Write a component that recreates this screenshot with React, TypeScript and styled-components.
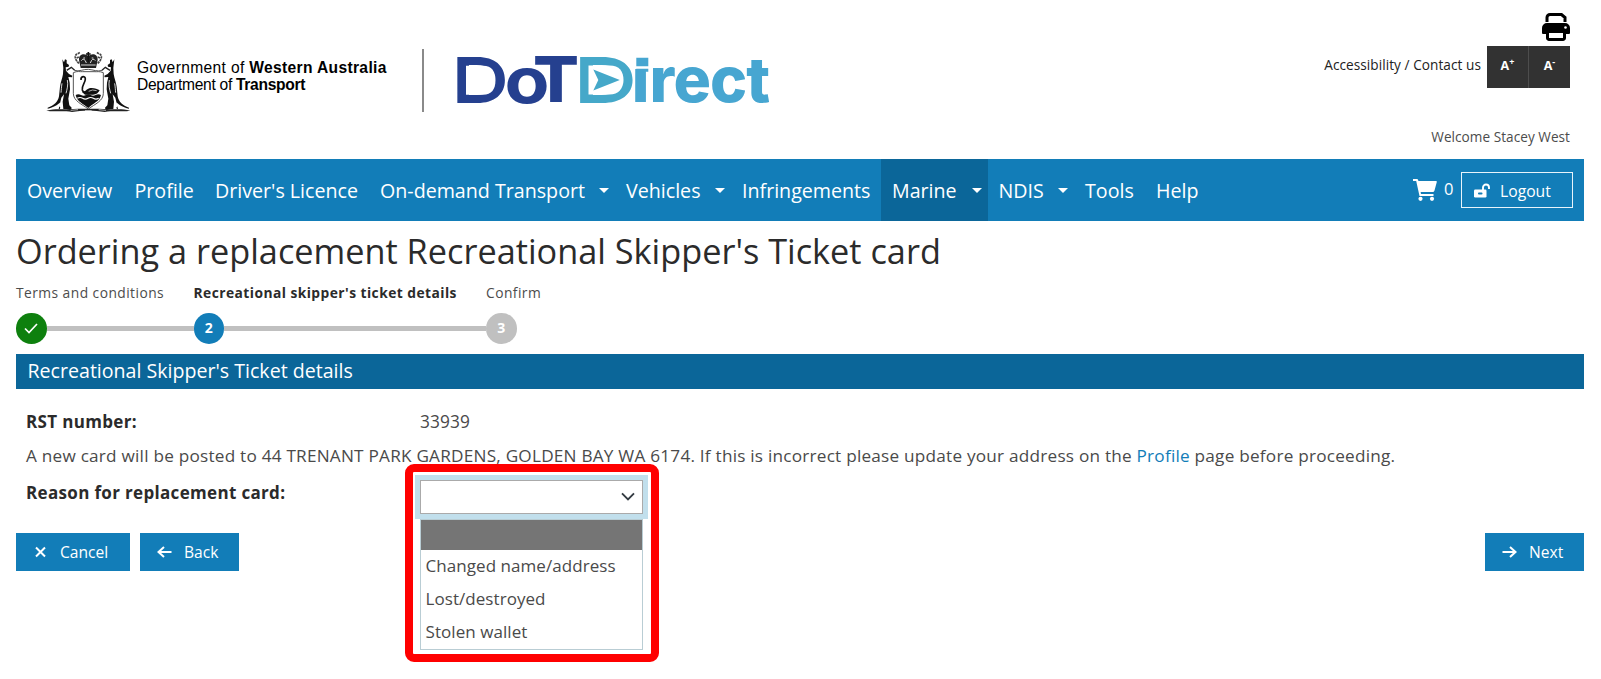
import React from "react";
import styled, { createGlobalStyle } from "styled-components";

const GlobalStyle = createGlobalStyle`
  *, *::before, *::after { box-sizing: border-box; }
  body {
    margin: 0;
    background: #fff;
    color: #4a4a4a;
    font-family: "Open Sans", "Noto Sans", sans-serif;
    font-size: 17px;
  }
  h1, h2, p { margin: 0; padding: 0; }
`;

const blue = "#127db8";
const darkBlue = "#0b6699";

const Page = styled.div`
  width: 1601px;
  height: 679px;
  padding: 0 17px 0 16px;
  display: flex;
  flex-direction: column;
  overflow: hidden;
`;

const Header = styled.header`
  height: 159px;
  display: flex;
  justify-content: space-between;
`;

const Brand = styled.div`
  display: flex;
  align-items: flex-start;
  padding: 49px 0 0 30px;
`;

const AgencyName = styled.div`
  width: 293px;
  height: 63px;
  padding: 10px 0 0 6px;
  border-right: 2px solid #8a8a8a;
  color: #000;
  font-family: "Liberation Sans", Arial, sans-serif;
  font-size: 15.6px;
  line-height: 17px;
  white-space: nowrap;
`;

const AgencyLine = styled.div<{ $track: number }>`
  letter-spacing: ${(p) => p.$track}px;
`;

const Logo = styled.svg`
  margin-left: 29px;
  overflow: visible;
`;

const Utilities = styled.div`
  display: flex;
  flex-direction: column;
  align-items: flex-end;
  padding: 13px 14px 0 0;
`;

const UtilityRow = styled.div`
  display: flex;
  align-items: flex-start;
  margin-top: 5px;
`;

const UtilityLinks = styled.span`
  color: #222;
  font-size: 13.6px;
  line-height: 37px;
  margin-right: 6px;
  letter-spacing: 0.06px;
`;

const SizeButton = styled.button`
  width: 42px;
  height: 42px;
  padding: 0 0 3px;
  border: 0;
  border-right: 1px solid #4d4d4d;
  background: #323232;
  color: #fff;
  font: 700 12.5px "Open Sans", sans-serif;
  sup { font-size: 9px; line-height: 0; vertical-align: 5px; }
  &:last-child { border-right: 0; width: 41px; }
`;

const Welcome = styled.div`
  margin-top: 39px;
  font-size: 13.6px;
  line-height: 20px;
  letter-spacing: 0.04px;
  color: #4c4c4c;
`;

const Nav = styled.nav`
  height: 62px;
  flex: none;
  display: flex;
  align-items: center;
  background: ${blue};
  color: #fff;
`;

const NavItem = styled.a<{ $width: number; $active?: boolean }>`
  width: ${(p) => p.$width}px;
  height: 62px;
  padding: 1px 6px 0 11px;
  display: flex;
  align-items: center;
  justify-content: space-between;
  background: ${(p) => (p.$active ? darkBlue : "transparent")};
  font-size: 19.65px;
  white-space: nowrap;
`;

const Caret = styled.span`
  border: 5px solid transparent;
  border-top-color: #fff;
  border-bottom: 0;
`;

const Account = styled.div`
  margin-left: auto;
  padding-right: 11px;
  display: flex;
  align-items: center;
`;

const CartCount = styled.span`
  width: 24px;
  padding: 0 0 2px 7px;
  font-size: 16.5px;
  line-height: 22px;
`;

const LogoutButton = styled.button`
  width: 112px;
  height: 36px;
  padding: 1px 0 0 12px;
  display: flex;
  align-items: center;
  gap: 10px;
  border: 1.5px solid #e8f4fb;
  background: transparent;
  color: #fff;
  font: 15.7px "Open Sans", sans-serif;
`;

const Title = styled.h1`
  height: 60px;
  flex: none;
  color: #2b2b2b;
  font-size: 34.28px;
  font-weight: 400;
  line-height: 59px;
  white-space: nowrap;
`;

const Steps = styled.div`
  height: 72.5px;
  flex: none;
  display: flex;
`;

const Step = styled.div<{ $width: number; $current?: boolean }>`
  width: ${(p) => p.$width}px;
  font-size: 13.8px;
  line-height: 24px;
  letter-spacing: 0.45px;
  white-space: nowrap;
  font-weight: ${(p) => (p.$current ? 700 : 400)};
  color: ${(p) => (p.$current ? "#2b2b2b" : "#4c4c4c")};
`;

const StepTrack = styled.div`
  display: flex;
  align-items: center;
  margin-top: 8px;
`;

const StepDot = styled.span<{ $color: string }>`
  width: 30.5px;
  height: 30.5px;
  flex: none;
  border-radius: 50%;
  display: flex;
  align-items: center;
  justify-content: center;
  background: ${(p) => p.$color};
  color: #fff;
  font-size: 14px;
  font-weight: 700;
  letter-spacing: 0;
`;

const StepLine = styled.span`
  flex: 1;
  height: 5px;
  background: #c0c0c0;
`;

const SectionTitle = styled.h2`
  height: 35.5px;
  flex: none;
  padding-left: 11.5px;
  background: ${darkBlue};
  color: #fff;
  font-size: 19.6px;
  font-weight: 400;
  line-height: 34px;
`;

const Form = styled.section`
  height: 144px;
  flex: none;
  padding: 16px 10px 0;
`;

const FieldRow = styled.div`
  display: flex;
  height: 34px;
  line-height: 34px;
`;

const FieldLabel = styled.div<{ $drop?: number }>`
  width: 394px;
  padding-top: ${(p) => p.$drop ?? 0}px;
  color: #2b2b2b;
  font-size: 17px;
  font-weight: 700;
  letter-spacing: 0.33px;
`;

const FieldValue = styled.span`
  font-size: 17.3px;
  letter-spacing: 0.15px;
`;

const Notice = styled.p`
  height: 36px;
  line-height: 34px;
  font-size: 17.2px;
  letter-spacing: 0.22px;
  white-space: nowrap;
  a { color: ${blue}; }
`;

const SelectWrap = styled.div`
  position: relative;
  width: 223px;
  height: 34px;
  margin-top: 4.5px;
`;

const SelectBox = styled.div`
  width: 223px;
  height: 34px;
  padding: 0 7px 1px 0;
  display: flex;
  align-items: center;
  justify-content: flex-end;
  border: 1px solid #aaa;
  background: #fff;
  box-shadow: 0 0 0 5px #c1dfec;
`;

const OptionList = styled.div`
  position: absolute;
  z-index: 1;
  top: 39px;
  left: 0;
  width: 223px;
  height: 131px;
  border: 1px solid #b9cdd4;
  background: #fff;
`;

const Option = styled.div<{ $selected?: boolean }>`
  height: ${(p) => (p.$selected ? 30 : 33)}px;
  padding-left: 4.5px;
  background: ${(p) => (p.$selected ? "#757575" : "transparent")};
  font-size: 17px;
  line-height: 31px;
  letter-spacing: 0.06px;
`;

const Highlight = styled.div`
  position: absolute;
  z-index: 2;
  top: -15.5px;
  left: -15px;
  width: 254px;
  height: 197.5px;
  border: 8px solid #f00;
  border-radius: 9px;
  pointer-events: none;
`;

const Actions = styled.div`
  display: flex;
  gap: 10px;
`;

const ActionButton = styled.button<{ $width: number; $end?: boolean }>`
  width: ${(p) => p.$width}px;
  height: 38px;
  margin-left: ${(p) => (p.$end ? "auto" : 0)};
  padding: 0 0 0 17px;
  display: flex;
  align-items: center;
  gap: 12px;
  border: 0;
  background: ${blue};
  color: #fff;
  font: 15.6px "Open Sans", sans-serif;
`;

const Kangaroo = () => (
  <g>
    <path
      d="M97 88l5 9 3-9 5 2v10l7 5-1 5-9 2 1 10 9 10 10 5-1 5-11-1 4 17 1 20-5 28 3 20 7 7-1 4h-24l-2-22 4-22-8 10-6 26 3 4-2 4H86l5-20c-9 8-20 16-38 19v-3c19-6 31-18 34-34l3-29c2-14 7-25 9-38l1-18z"
      fill="#111"
    />
    <path d="M112 150c3 16-1 28-4 40M96 160c-2 12-2 20-3 28" stroke="#fff" strokeWidth="2.500" fill="none" />
    <path d="M110 121l14-9 10 9" stroke="#222" strokeWidth="4" fill="none" />
  </g>
);

const CoatOfArms = () => (
  <svg width="85" height="64" viewBox="48 57 255 192" aria-label="Coat of arms">
    <Kangaroo />
    <g transform="matrix(-1 0 0 1 350 0)">
      <Kangaroo />
    </g>
    <path d="M130 128c12-6 20-2 28-3h34c10 1 16-2 28 3v62c0 23-25 32-45 47-20-15-45-24-45-47z" fill="#fff" stroke="#555" strokeWidth="3" />
    <path d="M137 195q8-5 16 0t15 0 14 0 15 0 16 0c-4 20-26 26-38 39-16-13-34-19-38-39z" fill="#111" />
    <path d="M142 205q8-5 16 0t16 0 16 0 16 0" stroke="#fff" strokeWidth="3.500" fill="none" />
    <path d="M153 150c-1-13 13-13 13-3 0 12-12 21-9 33 2 7 9 8 15 8" stroke="#111" strokeWidth="5" fill="none" />
    <path d="M156 186c9 2 12-8 22-11 12-3 24 3 31 6-4 8-10 13-20 13h-24z" fill="#111" />
    <path d="M176 184q11-7 24-2" stroke="#fff" strokeWidth="2" fill="none" />
    <path d="M147 90c-1-19 19-21 28-11 9-10 29-8 28 11l-5 24h-46z" fill="#222" />
    <path d="M154 92q8-12 15 7M181 99q7-19 15-7M153 105h44M160 84h5M185 84h5" stroke="#fff" strokeWidth="2.500" fill="none" />
    <path d="M175 66v30M168 72h14" stroke="#111" strokeWidth="5" />
    <path d="M147 100c-10-9-15-19-8-27l12-6M140 84l9-4M203 100c10-9 15-19 8-27l-12-6M210 84l-9-4" stroke="#444" strokeWidth="5" fill="none" strokeDasharray="7 2" />
    <path d="M133 121c15 5 27-4 42-3s27 8 42 3" stroke="#555" strokeWidth="3" fill="none" />
    <path d="M49 242c28-7 47-2 70-5 29-1 84-1 112 0 25 3 44-2 70 5-31 4-54 0-77 4-30-5-68-5-98 0-22-4-47 0-77-4z" fill="#222" />
    <path d="M122 241l22-2M206 239l22 2M165 242h20" stroke="#fff" strokeWidth="2" />
  </svg>
);

const DotDirectLogo = () => (
  <Logo width="320" height="64" viewBox="453 49 320 64" fontFamily="Inter, sans-serif" fontWeight="700" fontSize="63">
    <g fill="#25408f">
      <text x="452.200" y="103" textLength="56.200" lengthAdjust="spacingAndGlyphs">D</text>
      <path d="M466 65.800h17c9 0 12.500 6 12.500 14.700s-4 14.300-12.500 14.300h-17z" fill="#fff" />
      <text x="504.500" y="103" textLength="45" lengthAdjust="spacingAndGlyphs">o</text>
      <text x="533" y="102" textLength="46" lengthAdjust="spacingAndGlyphs" fontWeight="800">T</text>
    </g>
    <g fill="#45a8c9">
      <text x="574.500" y="102.500" textLength="62" lengthAdjust="spacingAndGlyphs">D</text>
      <path d="M588.500 65.500h21c10 0 14 6 14 14.500s-5 14.500-14 14.500h-21z" fill="#fff" />
      <path d="M593.300 69.500l26.500 10.500-26.500 10.500 5-10.500z" />
      <g fill="#47a6d1">
        <text y="102" x="631.800 649.500 673.500 710 746.300" fontWeight="800" fontSize="62.500">irect</text>
        <path d="M633.500 52h17v17h-17z" fill="#fff" />
        <path d="M636.300 57.800h12v8.500h-12zM636.300 68.800h12v3h-12z" />
      </g>
    </g>
  </Logo>
);

const PrintIcon = () => (
  <svg width="28" height="28" viewBox="0 0 28 28" fill="none" stroke="#000" strokeWidth="3">
    <path d="M5 9V4.500a3 3 0 0 1 3-3h11.500l3.500 3V9" />
    <path d="M0 20v-5a5 5 0 0 1 5-5h18a5 5 0 0 1 5 5v5a1 1 0 0 1-1 1h-3v-3H4v3H1a1 1 0 0 1-1-1z" fill="#000" stroke="none" />
    <path d="M5.500 18.500h17V25a1.500 1.500 0 0 1-1.500 1.500H7A1.500 1.500 0 0 1 5.500 25z" fill="#fff" />
    <circle cx="23.500" cy="14.500" r="1.300" fill="#fff" stroke="none" />
  </svg>
);

const CartIcon = () => (
  <svg width="24" height="22" viewBox="0 0 24 22" fill="#fff">
    <path d="M0 0h4.500l1 2H23a.8.8 0 0 1 .8 1l-2.300 8.500a2 2 0 0 1-2 1.500H7.600l.4 2h12.500v2H6.500L3.200 2H0z" />
    <circle cx="7.500" cy="19.800" r="2.100" />
    <circle cx="19" cy="19.800" r="2.100" />
  </svg>
);

const UnlockIcon = () => (
  <svg width="16" height="15" viewBox="0 0 16 15">
    <path d="M9 7V4.500a3 3 0 0 1 6 0V6" fill="none" stroke="#fff" strokeWidth="1.900" />
    <rect y="6.500" width="12.500" height="8" rx="1.200" fill="#fff" />
    <rect x="4" y="9.500" width="4.500" height="1.900" rx="0.900" fill={blue} />
  </svg>
);

const CrossIcon = () => (
  <svg width="15" height="12" viewBox="0 0 15 12" stroke="#fff" strokeWidth="2">
    <path d="M3 1.500l9 9M12 1.500l-9 9" />
  </svg>
);

const ArrowIcon = ({ flip }: { flip?: boolean }) => (
  <svg width="15" height="12" viewBox="0 0 15 12" fill="none" stroke="#fff" strokeWidth="2">
    <path d={flip ? "M14.500 6h-13M7 1L1.500 6 7 11" : "M.5 6h13M8 1l5.500 5L8 11"} />
  </svg>
);

const navItems = [
  { label: "Overview", width: 107.5 },
  { label: "Profile", width: 80.5 },
  { label: "Driver's Licence", width: 165 },
  { label: "On-demand Transport", width: 246, menu: true },
  { label: "Vehicles", width: 116, menu: true },
  { label: "Infringements", width: 150 },
  { label: "Marine", width: 106.5, menu: true, active: true },
  { label: "NDIS", width: 86.5, menu: true },
  { label: "Tools", width: 71 },
  { label: "Help", width: 70 },
];

const reasons = ["Changed name/address", "Lost/destroyed", "Stolen wallet"];

export default function App() {
  return (
    <Page>
      <GlobalStyle />
      <Header>
        <Brand>
          <CoatOfArms />
          <AgencyName>
            <AgencyLine $track={0.34}>Government of <b>Western Australia</b></AgencyLine>
            <AgencyLine $track={-0.3}>Department of <b>Transport</b></AgencyLine>
          </AgencyName>
          <DotDirectLogo />
        </Brand>
        <Utilities>
          <PrintIcon />
          <UtilityRow>
            <UtilityLinks>Accessibility / Contact us</UtilityLinks>
            <SizeButton>A<sup>+</sup></SizeButton>
            <SizeButton>A<sup>-</sup></SizeButton>
          </UtilityRow>
          <Welcome>Welcome Stacey West</Welcome>
        </Utilities>
      </Header>

      <Nav>
        {navItems.map((item) => (
          <NavItem key={item.label} $width={item.width} $active={item.active}>
            {item.label}
            {item.menu && <Caret />}
          </NavItem>
        ))}
        <Account>
          <CartIcon />
          <CartCount>0</CartCount>
          <LogoutButton><UnlockIcon />Logout</LogoutButton>
        </Account>
      </Nav>

      <Title>Ordering a replacement Recreational Skipper's Ticket card</Title>

      <Steps>
        <Step $width={177.5}>
          Terms and conditions
          <StepTrack>
            <StepDot $color="#0e800e">
              <svg width="14" height="11" viewBox="0 0 14 11" fill="none" stroke="#fff" strokeWidth="1.700">
                <path d="M1 5.500l4 4 8-8.500" />
              </svg>
            </StepDot>
            <StepLine />
          </StepTrack>
        </Step>
        <Step $width={292.5} $current>
          Recreational skipper's ticket details
          <StepTrack>
            <StepDot $color={blue}>2</StepDot>
            <StepLine />
          </StepTrack>
        </Step>
        <Step $width={60}>
          Confirm
          <StepTrack>
            <StepDot $color="#c0c0c0">3</StepDot>
          </StepTrack>
        </Step>
      </Steps>

      <SectionTitle>Recreational Skipper's Ticket details</SectionTitle>

      <Form>
        <FieldRow>
          <FieldLabel>RST number:</FieldLabel>
          <FieldValue>33939</FieldValue>
        </FieldRow>
        <Notice>
          A new card will be posted to 44 TRENANT PARK GARDENS, GOLDEN BAY WA 6174. If this is incorrect please update
          your address on the <a>Profile</a> page before proceeding.
        </Notice>
        <FieldRow>
          <FieldLabel $drop={1}>Reason for replacement card:</FieldLabel>
          <SelectWrap>
            <SelectBox>
              <svg width="14" height="9" viewBox="0 0 14 9" fill="none" stroke="#333b42" strokeWidth="1.900">
                <path d="M1 1.300l6 6 6-6" />
              </svg>
            </SelectBox>
            <OptionList>
              <Option $selected />
              {reasons.map((reason) => (
                <Option key={reason}>{reason}</Option>
              ))}
            </OptionList>
            <Highlight />
          </SelectWrap>
        </FieldRow>
      </Form>

      <Actions>
        <ActionButton $width={114}><CrossIcon />Cancel</ActionButton>
        <ActionButton $width={99}><ArrowIcon flip />Back</ActionButton>
        <ActionButton $width={99} $end><ArrowIcon />Next</ActionButton>
      </Actions>
    </Page>
  );
}
